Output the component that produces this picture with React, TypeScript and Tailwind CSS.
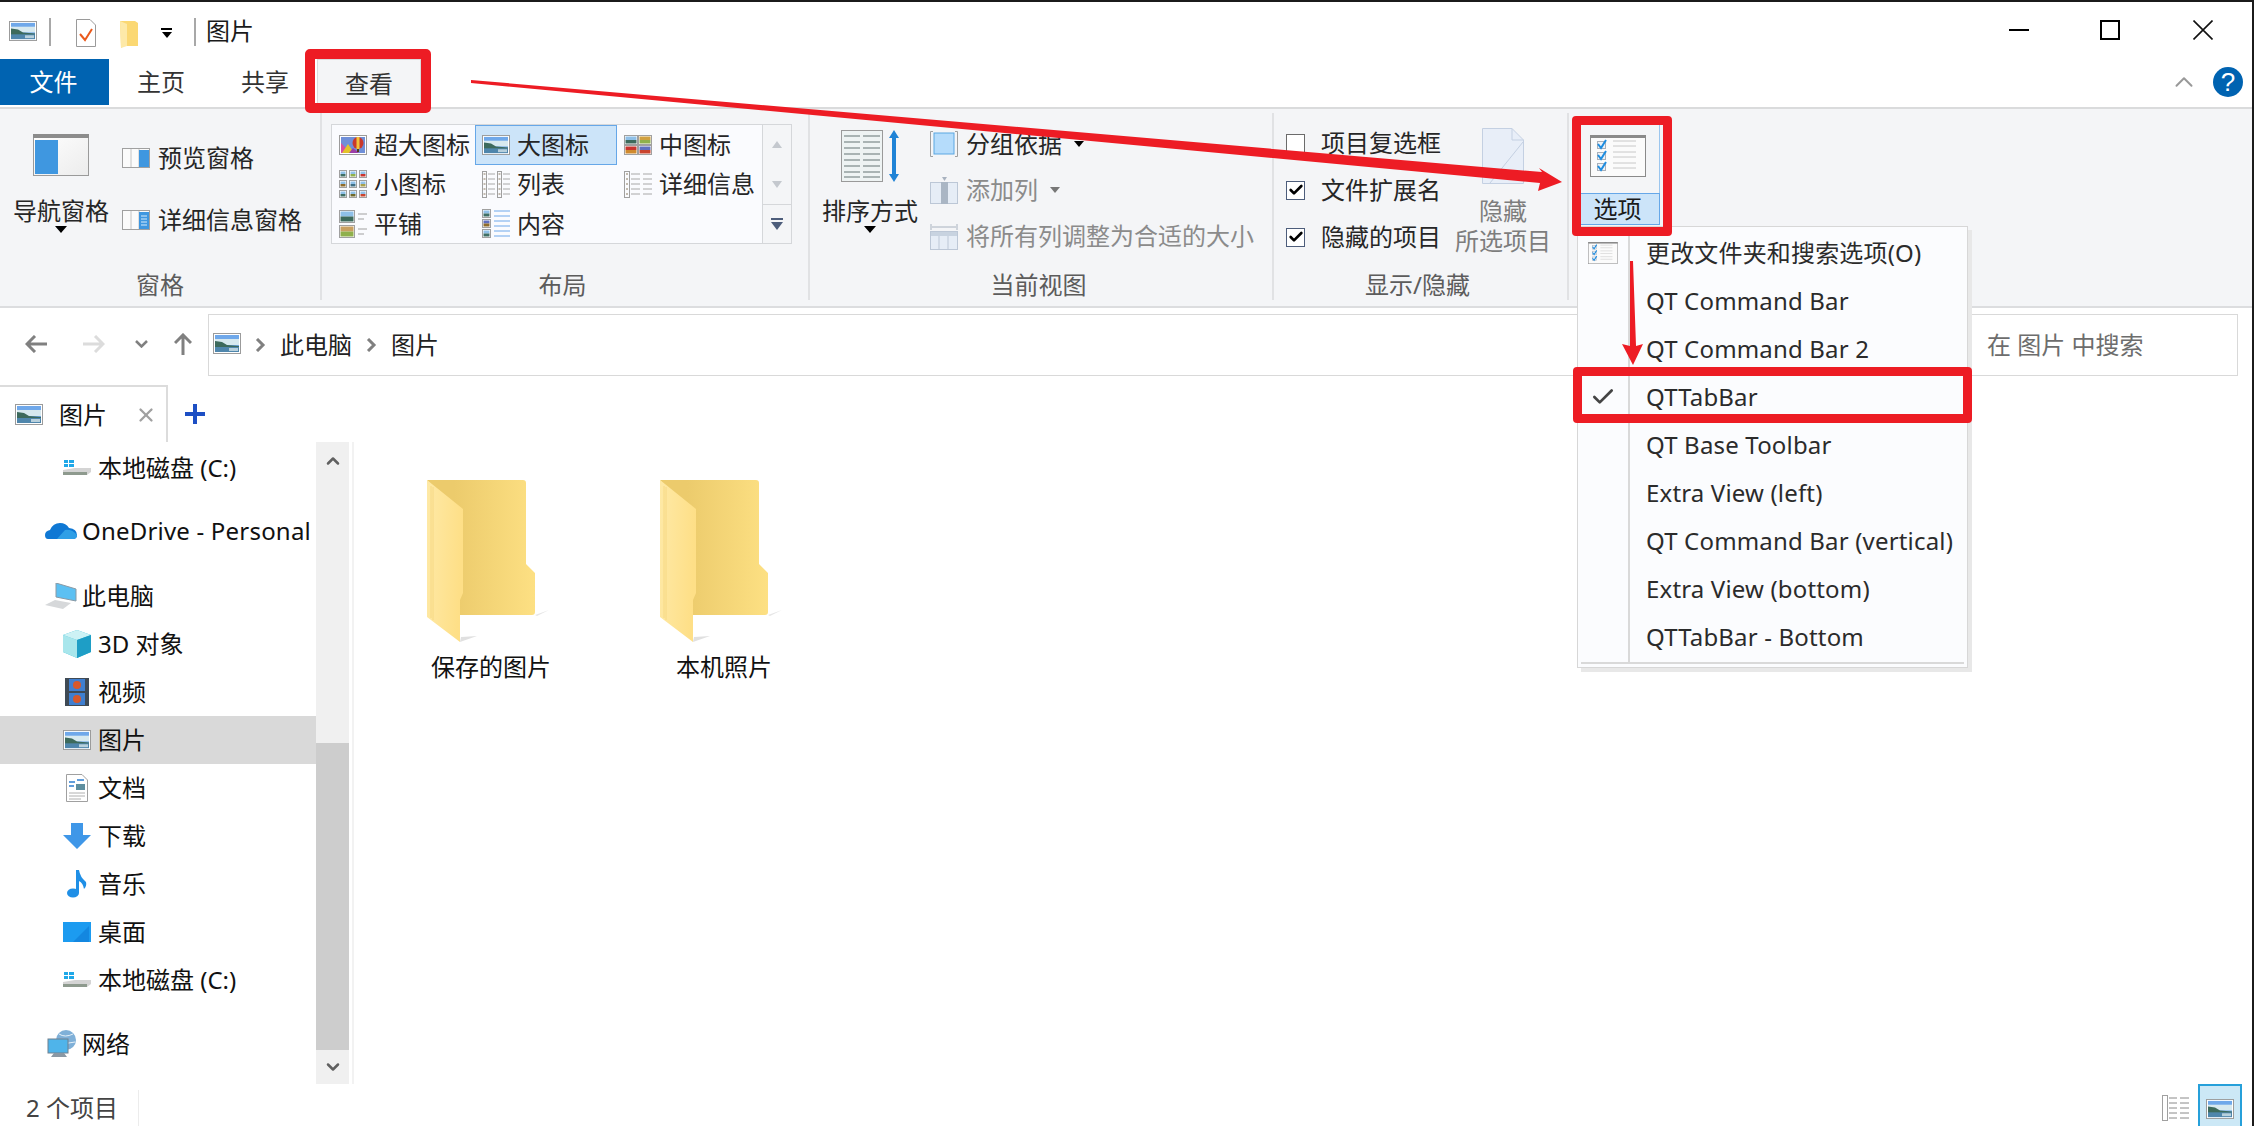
import { ChevronDown, ChevronUp, Check, X } from 'lucide-react';
import type { ReactNode } from 'react';

const FONT = "font-['Noto_Sans','Noto_Sans_CJK_SC',sans-serif]";

function Pic({ className = 'w-[28px] h-[21px]' }: { className?: string }) {
  return (
    <svg viewBox="0 0 28 21" className={className} preserveAspectRatio="none">
      <rect x="0.5" y="0.5" width="27" height="20" fill="#fff" stroke="#9b9b9b" />
      <rect x="2" y="2" width="24" height="17" fill="#6fa8ea" />
      <rect x="2" y="6" width="24" height="6" fill="#d7e9ef" />
      <path d="M2 8 L9 9 L14 12 L26 13 L26 19 L2 19 Z" fill="#3d6a5c" />
      <rect x="2" y="14" width="24" height="5" fill="#4f86ac" />
      <rect x="16" y="15" width="9" height="3" fill="#b8d0dc" />
    </svg>
  );
}

function Thumb({ x, y, w = 8, h = 8, c = '#4f8a6c', d = '#8fc0e8' }: { x: number; y: number; w?: number; h?: number; c?: string; d?: string }) {
  return (
    <g>
      <rect x={x + 0.5} y={y + 0.5} width={w - 1} height={h - 1} fill="#fff" stroke="#a0a0a0" />
      <rect x={x + 1.5} y={y + 1.5} width={w - 3} height={(h - 3) / 2} fill={d} />
      <rect x={x + 1.5} y={y + 1.5 + (h - 3) / 2} width={w - 3} height={(h - 3) / 2} fill={c} />
    </g>
  );
}

function GalleryIcon({ kind }: { kind: string }) {
  if (kind === 'lg') return <Pic className="w-[28px] h-[20px]" />;
  if (kind === 'xl') {
    return (
      <svg viewBox="0 0 28 20" className="w-[28px] h-[20px]">
        <rect x="0.5" y="0.5" width="27" height="19" fill="#fff" stroke="#9b9b9b" />
        <rect x="2" y="2" width="24" height="16" fill="#6f8fd8" />
        <path d="M2 18 L2 8 L8 14 L13 18 Z" fill="#d94fa0" />
        <path d="M3 18 L9 9 L15 18 Z" fill="#e3c32b" />
        <path d="M10 18 L14 13 L20 18 Z" fill="#9b3ea8" />
        <ellipse cx="19" cy="8" rx="5.500" ry="6" fill="#c9382c" />
        <rect x="17.500" y="2" width="3" height="12" fill="#f1c33a" />
        <rect x="18" y="14" width="2" height="3" fill="#5a3a1a" />
      </svg>
    );
  }
  if (kind === 'md') {
    return (
      <svg viewBox="0 0 28 20" className="w-[28px] h-[20px]">
        <Thumb x={0} y={0} w={14} h={10} c="#3d6a5c" />
        <Thumb x={14} y={0} w={14} h={10} c="#8fb04c" d="#d0a040" />
        <Thumb x={0} y={10} w={14} h={10} c="#d08a2e" d="#c9342e" />
        <Thumb x={14} y={10} w={14} h={10} c="#c9442e" d="#5f6fc0" />
      </svg>
    );
  }
  if (kind === 'sm') {
    const colors = ['#3f6f66', '#8fb04c', '#c9342e', '#8f6c2c', '#3f6f86', '#a8a04c', '#3f6f66', '#6f6a2c', '#c9442e'];
    return (
      <svg viewBox="0 0 28 28" className="w-[28px] h-[28px]">
        {colors.map((c, i) => (
          <Thumb key={i} x={(i % 3) * 10} y={Math.floor(i / 3) * 10} w={8} h={8} c={c} />
        ))}
      </svg>
    );
  }
  if (kind === 'list') {
    return (
      <svg viewBox="0 0 28 27" className="w-[28px] h-[27px]" fill="none">
        {[0, 15].map((x) => (
          <g key={x}>
            <rect x={x + 0.5} y="0.5" width="4" height="26" stroke="#a0a0a0" />
            <path d={`M${x + 1.500} 3h2M${x + 1.500} 8h2M${x + 1.500} 13h2M${x + 1.500} 18h2M${x + 1.500} 23h2`} stroke="#8a7a60" />
            <path d={`M${x + 6} 3h7M${x + 6} 8h7M${x + 6} 13h7M${x + 6} 18h7M${x + 6} 23h7`} stroke="#a8a8a8" />
          </g>
        ))}
      </svg>
    );
  }
  if (kind === 'details') {
    return (
      <svg viewBox="0 0 28 27" className="w-[28px] h-[27px]" fill="none">
        <rect x="0.5" y="0.5" width="5" height="26" stroke="#a0a0a0" />
        <path d="M2 3h2M2 8h2M2 13h2M2 18h2M2 23h2" stroke="#8a7a60" />
        <path d="M7 3h9M19 3h9M7 8h9M19 8h9M7 13h9M19 13h9M7 18h9M19 18h9M7 23h9M19 23h9" stroke="#a8a8a8" />
      </svg>
    );
  }
  if (kind === 'tile') {
    return (
      <svg viewBox="0 0 28 28" className="w-[28px] h-[28px]">
        <Thumb x={0} y={0} w={16} h={13} c="#3d6a5c" />
        <Thumb x={0} y={15} w={16} h={13} c="#8fb04c" d="#c9a060" />
        <path d="M19 4h9M19 9h6M19 19h9M19 24h6" stroke="#a0a0a0" />
      </svg>
    );
  }
  return (
    <svg viewBox="0 0 28 29" className="w-[28px] h-[29px]">
      <Thumb x={0} y={0} w={9} h={9} c="#3f6f66" />
      <Thumb x={0} y={10} w={9} h={9} c="#8f6c2c" d="#5f6fc0" />
      <Thumb x={0} y={20} w={9} h={9} c="#3f6f66" />
      <path d="M12 2h16M12 7h16M12 12h16M12 17h16M12 22h16M12 27h16" stroke="#6fa8ea" strokeWidth="1" />
    </svg>
  );
}

function PaneIcon({ side }: { side: 'preview' | 'details' }) {
  return (
    <svg viewBox="0 0 28 20" className="w-[28px] h-[20px]">
      <rect x="0.5" y="0.5" width="27" height="19" fill="#fbfbfb" stroke="#a0a0a0" />
      <path d="M9 1v18M17 1v18" stroke="#c4c4c4" />
      <rect x="17" y="2" width="10" height="17" fill="#3f97e0" />
      {side === 'details' && <path d="M19 6h6M19 9h6M19 12h6M19 15h6" stroke="#d9ecfb" />}
    </svg>
  );
}

function DropArrow() {
  return <div className="w-0 h-0 border-x-[6px] border-x-transparent border-t-[7px] border-t-black" />;
}

function RibbonGroup({ width, label, labelPad, children }: { width: string; label: string; labelPad?: string; children: ReactNode }) {
  return (
    <div className={`${width} flex flex-col border-r-2 border-[#e1e2e4]`}>
      <div className="h-[156px] flex">{children}</div>
      <div className={`h-[31px] flex items-center justify-center text-[24px] text-[#5c5c5c] ${labelPad ?? ''}`}>{label}</div>
    </div>
  );
}

function SmallBtn({ icon, text, muted, arrow }: { icon: ReactNode; text: string; muted?: boolean; arrow?: boolean }) {
  return (
    <div className={`h-[32px] flex items-center gap-[8px] whitespace-nowrap ${muted ? 'text-[#8b8b8b]' : 'text-[#262626]'}`}>
      <div className="w-[28px] flex justify-center">{icon}</div>
      <span>{text}</span>
      {arrow && (
        <div className={`ml-[4px] w-0 h-0 border-x-[5px] border-x-transparent border-t-[6px] ${muted ? 'border-t-[#777]' : 'border-t-black'}`} />
      )}
    </div>
  );
}

function CheckRow({ text, checked }: { text: string; checked?: boolean }) {
  return (
    <div className="h-[32px] flex items-center gap-[16px] text-[#262626] whitespace-nowrap">
      <div className={`w-[19px] h-[19px] border ${checked ? 'border-[#4d5d7b]' : 'border-[#6b6b6b]'} bg-white flex items-center justify-center`}>
        {checked && <Check className="w-[16px] h-[16px] text-black" strokeWidth={4} />}
      </div>
      <span>{text}</span>
    </div>
  );
}

function GalleryCell({ kind, text, selected, width }: { kind: string; text: string; selected?: boolean; width: string }) {
  return (
    <div className={`${width} h-[39.5px] flex items-center gap-[7px] pl-[7px] whitespace-nowrap ${selected ? 'bg-[#cce4f9] outline outline-1 -outline-offset-1 outline-[#66a7e8]' : ''}`}>
      <div className="w-[28px] flex justify-center">
        <GalleryIcon kind={kind} />
      </div>
      <span>{text}</span>
    </div>
  );
}

function OptionsIcon({ className }: { className: string }) {
  return (
    <svg viewBox="0 0 56 42" className={className}>
      <rect x="0.5" y="0.5" width="55" height="41" fill="#fbfbfb" stroke="#8a8a8a" />
      <rect x="0" y="0" width="56" height="3" fill="#8a8a8a" />
      {[9, 20, 31].map((y) => (
        <g key={y}>
          <rect x="7.5" y={y - 2.5} width="8" height="7" fill="#eef3f8" stroke="#a8b0ba" />
          <path d={`M8 ${y} L11 ${y + 4} L16 ${y - 4}`} stroke="#1d8ce0" strokeWidth="2" fill="none" />
          <path d={`M23 ${y - 3}h23M23 ${y + 2}h23`} stroke="#c8c8c8" />
        </g>
      ))}
    </svg>
  );
}

function Folder() {
  return (
    <svg viewBox="0 0 124 166" className="w-[124px] h-[166px]">
      <defs>
        <linearGradient id="folderBack" x1="0" x2="1" y1="0" y2="0">
          <stop offset="0.25" stopColor="#eccb6c" />
          <stop offset="1" stopColor="#fde083" />
        </linearGradient>
        <linearGradient id="folderFront" x1="0" x2="1" y1="0" y2="0.2">
          <stop offset="0" stopColor="#fee9a6" />
          <stop offset="1" stopColor="#fedf87" />
        </linearGradient>
      </defs>
      <path d="M108 135 L122 130 L110 136 Z" fill="#e6e6e6" />
      <path d="M33 162 L50 156 L34 157 Z" fill="#e0e0e0" />
      <path d="M0 0 H96 Q99 0 99 3 V84 L108 93 V132 Q108 135 105 135 H33 L30 40 Z" fill="url(#folderBack)" />
      <path d="M0 0 L36 29 V113 L33 120 V162 L0 137 Z" fill="url(#folderFront)" />
      <path d="M4 6 V138 M6 7 V140" stroke="#f5d57e" strokeWidth="0.8" />
    </svg>
  );
}

function TreeRow({ icon, text, indent, selected, gap, wide }: { icon: ReactNode; text: string; indent?: boolean; selected?: boolean; gap?: string; wide?: boolean }) {
  return (
    <div className={`h-[48px] flex items-center whitespace-nowrap text-[#111] ${gap ?? ''} ${selected ? 'bg-[#d9d9d9]' : ''} ${indent ? 'pl-[63px]' : 'pl-[45px]'} ${wide ? 'tracking-[0.2px]' : ''}`}>
      <div className={`${indent ? 'w-[35px]' : 'w-[37px]'} flex items-center`}>{icon}</div>
      <span>{text}</span>
    </div>
  );
}

function DriveIcon() {
  return (
    <svg viewBox="0 0 28 16" className="w-[28px] h-[16px]">
      <path d="M1 0h4v3H1zM6 0h5v3H6zM1 4h4v3H1zM6 4h5v3H6z" fill="#1fa8e8" />
      <path d="M0 10 L12 8 L28 8 V12 L24 15 H0 Z" fill="#d4d4d4" />
      <rect x="0" y="12" width="24" height="3" fill="#8e9a8e" />
    </svg>
  );
}

export default function App() {
  const menuItems = ['更改文件夹和搜索选项(O)', 'QT Command Bar', 'QT Command Bar 2', 'QTTabBar', 'QT Base Toolbar', 'Extra View (left)', 'QT Command Bar (vertical)', 'Extra View (bottom)', 'QTTabBar - Bottom'];

  return (
    <div lang="zh-CN" className={`${FONT} relative w-[2254px] h-[1126px] overflow-hidden bg-white border-t-2 border-r-2 border-[#1b1b1b] text-[24px] flex flex-col`}>
      {/* title bar */}
      <div className="h-[57px] flex items-start shrink-0">
        <div className="pl-[9px] pt-[19px]">
          <Pic className="w-[28px] h-[20px]" />
        </div>
        <div className="ml-[12px] mt-[16px] w-[2px] h-[28px] bg-[#a8a8a8]" />
        <svg viewBox="0 0 20 28" className="ml-[25px] mt-[17px] w-[20px] h-[28px]">
          <path d="M0.5 0.5H14L19.5 6V27.5H0.5Z" fill="#fff" stroke="#9a9a9a" />
          <path d="M4 15 L9 21 L16 10" stroke="#ea5a1c" strokeWidth="2" fill="none" />
        </svg>
        <svg viewBox="0 0 18 28" className="ml-[24px] mt-[19px] w-[18px] h-[28px]">
          <path d="M0 0H15L18 2V25H4L1 27Z" fill="#fbd873" />
          <path d="M0 0L7 3V25L1 27Z" fill="#fde9a8" />
        </svg>
        <div className="ml-[23px] mt-[26px] flex flex-col items-center gap-[2px]">
          <div className="w-[11px] h-[2px] bg-black" />
          <div className="w-0 h-0 border-x-[5px] border-x-transparent border-t-[6px] border-t-black" />
        </div>
        <div className="ml-[22px] mt-[16px] w-[2px] h-[28px] bg-[#a8a8a8]" />
        <div className="ml-[10px] mt-[11px] leading-[36px] text-[#1a1a1a]">图片</div>
        <div className="ml-auto flex items-start">
          <div className="w-[20px] h-[2px] mt-[27px] bg-black" />
          <div className="ml-[71px] mt-[18px] w-[20px] h-[20px] border-2 border-black" />
          <svg viewBox="0 0 20 20" className="ml-[73px] mr-[39px] mt-[18px] w-[20px] h-[20px]">
            <path d="M0.5 0.5L19.5 19.5M19.5 0.5L0.5 19.5" stroke="#111" strokeWidth="1.6" />
          </svg>
        </div>
      </div>

      {/* ribbon tabs */}
      <div className="h-[50px] shrink-0 flex items-start border-b-2 border-[#dadbdc] text-[#333]">
        <div className="w-[109px] pr-[2px] h-[46px] bg-[#0063b1] text-white flex items-center justify-center">文件</div>
        <div className="ml-[28px] h-[46px] flex items-center">主页</div>
        <div className="ml-[56px] h-[46px] flex items-center">共享</div>
        <div className="ml-[28px] w-[104px] h-[48px] bg-[#f4f5f7] flex items-center justify-center border-x border-t border-[#dadbdc]">查看</div>
        <div className="ml-auto mr-[9px] mt-[8px] flex items-center gap-[14px]">
          <ChevronUp className="w-[30px] h-[30px] text-[#999]" strokeWidth={1.6} />
          <div className="w-[30px] h-[30px] rounded-full bg-[#0063b1] text-white flex items-center justify-center text-[26px] font-['Liberation_Sans',sans-serif]">?</div>
        </div>
      </div>

      {/* ribbon */}
      <div className="h-[199px] shrink-0 bg-[#f4f5f7] border-b-2 border-[#dcdddf] flex pt-[4px] pb-[6px]">
        <RibbonGroup width="w-[322px]" label="窗格">
          <div className="w-[122px] flex flex-col items-center pt-[21px]">
            <svg viewBox="0 0 56 42" className="w-[56px] h-[42px] shrink-0">
              <defs>
                <linearGradient id="navRight" x1="0" x2="1" y1="0" y2="1">
                  <stop offset="0" stopColor="#ffffff" />
                  <stop offset="1" stopColor="#ececec" />
                </linearGradient>
              </defs>
              <rect x="0.5" y="0.5" width="55" height="41" fill="url(#navRight)" stroke="#9a9a9a" />
              <rect x="0" y="0" width="56" height="4" fill="#8c8c8c" />
              <rect x="2" y="6" width="23" height="34" fill="#3f97e0" />
            </svg>
            <div className="mt-[19px] leading-[32px] text-[#262626] whitespace-nowrap">导航窗格</div>
            <div className="-mt-[1px]"><DropArrow /></div>
          </div>
          <div className="flex flex-col pt-[29px] gap-[30px]">
            <SmallBtn icon={<PaneIcon side="preview" />} text="预览窗格" />
            <SmallBtn icon={<PaneIcon side="details" />} text="详细信息窗格" />
          </div>
        </RibbonGroup>

        <RibbonGroup width="w-[488px]" label="布局" labelPad="pr-[5px]">
          <div className="ml-[9px] mt-[11px] w-[461px] h-[120px] bg-[#fafbfe] border border-[#d5d7da] flex text-[#262626]">
            <div className="w-[430px] grid grid-cols-[143px_142px_145px] content-start">
              <GalleryCell width="w-[143px]" kind="xl" text="超大图标" />
              <GalleryCell width="w-[142px]" kind="lg" text="大图标" selected />
              <GalleryCell width="w-[145px]" kind="md" text="中图标" />
              <GalleryCell width="w-[143px]" kind="sm" text="小图标" />
              <GalleryCell width="w-[142px]" kind="list" text="列表" />
              <GalleryCell width="w-[145px]" kind="details" text="详细信息" />
              <GalleryCell width="w-[143px]" kind="tile" text="平铺" />
              <GalleryCell width="w-[142px]" kind="content" text="内容" />
            </div>
            <div className="flex-1 bg-[#f4f5f7] border-l border-[#d5d7da] flex flex-col items-center">
              <div className="h-[39px] flex items-center"><div className="w-0 h-0 border-x-[5px] border-x-transparent border-b-[7px] border-b-[#c4c8ce]" /></div>
              <div className="h-[40px] flex items-center"><div className="w-0 h-0 border-x-[5px] border-x-transparent border-t-[7px] border-t-[#c4c8ce]" /></div>
              <div className="h-[39px] w-full border-t border-[#d5d7da] flex flex-col items-center justify-center gap-[2px]">
                <div className="w-[12px] h-[2px] bg-[#4d5d7b]" />
                <div className="w-0 h-0 border-x-[6px] border-x-transparent border-t-[8px] border-t-[#4d5d7b]" />
              </div>
            </div>
          </div>
        </RibbonGroup>

        <RibbonGroup width="w-[464px]" label="当前视图" labelPad="pr-[5px]">
          <div className="w-[120px] flex flex-col items-center pt-[17px]">
            <svg viewBox="0 0 62 52" className="w-[62px] h-[52px] translate-x-[2px]">
              <rect x="0.5" y="0.5" width="41" height="51" fill="#eef3f3" stroke="#9a9a9a" />
              {[6, 12, 18, 24, 30, 36, 42, 47].map((y) => (
                <path key={y} d={`M3 ${y}h16M22 ${y}h17`} stroke="#a9b3b3" strokeWidth="2" />
              ))}
              <path d="M53 0 L58 8 H55 V44 H58 L53 52 L48 44 H51 V8 H48 Z" fill="#1f83d6" />
            </svg>
            <div className="mt-[13px] leading-[32px] text-[#262626] whitespace-nowrap">排序方式</div>
            <div className="-mt-[1px]"><DropArrow /></div>
          </div>
          <div className="flex flex-col pt-[15px] gap-[14px]">
            <SmallBtn
              text="分组依据"
              arrow
              icon={
                <svg viewBox="0 0 28 26" className="w-[28px] h-[26px]">
                  <path d="M3 0.5H0.5V25.5H3M25 0.5H27.5V25.5H25" stroke="#a0a0a0" fill="none" />
                  <rect x="4" y="2" width="20" height="21" fill="#b5dcfb" stroke="#5aa7e2" />
                </svg>
              }
            />
            <SmallBtn
              text="添加列"
              muted
              arrow
              icon={
                <svg viewBox="0 0 28 27" className="w-[28px] h-[27px]">
                  <path d="M12 0h5l-2.500 4z" fill="#a8b2bf" />
                  <rect x="0.5" y="5.500" width="27" height="21" fill="#e6edf6" stroke="#bcc7d6" />
                  <rect x="11" y="5" width="7" height="22" fill="#aab6c4" />
                </svg>
              }
            />
            <SmallBtn
              text="将所有列调整为合适的大小"
              muted
              icon={
                <svg viewBox="0 0 28 27" className="w-[28px] h-[27px]">
                  <path d="M1 1v6M27 1v6M2 4h24" stroke="#a8b2bf" fill="none" />
                  <rect x="0.5" y="8.500" width="27" height="18" fill="#e6edf6" stroke="#bcc7d6" />
                  <rect x="1" y="9" width="26" height="4" fill="#c8d3e0" />
                  <path d="M9 13v13M18 13v13" stroke="#bcc7d6" />
                </svg>
              }
            />
          </div>
        </RibbonGroup>

        <RibbonGroup width="w-[295px]" label="显示/隐藏" labelPad="pr-[6px]">
          <div className="pl-[12px] pt-[14px] flex flex-col gap-[15px] w-[167px]">
            <CheckRow text="项目复选框" />
            <CheckRow text="文件扩展名" checked />
            <CheckRow text="隐藏的项目" checked />
          </div>
          <div className="w-[124px] flex flex-col items-center pt-[15px] text-[#7d7d7d] leading-[30px]">
            <svg viewBox="0 0 42 56" className="w-[42px] h-[56px] shrink-0">
              <path d="M0.5 0.5H30L41.500 12V55.500H0.500Z" fill="#e8eef8" stroke="#c4d0e2" />
              <path d="M30 0.5V12H41.500M41 14L8 55" stroke="#c4d0e2" fill="none" />
            </svg>
            <div className="mt-[12px]">隐藏</div>
            <div>所选项目</div>
          </div>
        </RibbonGroup>

        <div className="pl-[11px] pt-[12px]">
          <div className="w-[80px] h-[100px] flex flex-col">
            <div className="h-[68px] shrink-0 border-r border-[#9cc6ee] flex items-start justify-center pt-[10px] pr-[4px]">
              <OptionsIcon className="w-[56px] h-[42px]" />
            </div>
            <div className="h-[32px] shrink-0 leading-[30px] bg-[#cce4f9] border border-[#66a7e8] text-center pr-[5px] text-[#1a1a1a]">选项</div>
          </div>
        </div>
      </div>

      {/* address bar */}
      <div className="h-[72px] shrink-0 flex items-center text-[#222]">
        <svg viewBox="0 0 22 18" className="ml-[25px] w-[22px] h-[18px]" fill="none" stroke="#808080" strokeWidth="3">
          <path d="M22 9H3M10 1L2 9L10 17" />
        </svg>
        <svg viewBox="0 0 22 18" className="ml-[36px] w-[22px] h-[18px]" fill="none" stroke="#dcdcdc" strokeWidth="3">
          <path d="M0 9H19M12 1L20 9L12 17" />
        </svg>
        <svg viewBox="0 0 13 8" className="ml-[30px] w-[13px] h-[8px]" fill="none" stroke="#808080" strokeWidth="2.500">
          <path d="M1 1L6.500 6.500L12 1" />
        </svg>
        <svg viewBox="0 0 18 22" className="ml-[26px] w-[18px] h-[22px]" fill="none" stroke="#808080" strokeWidth="3">
          <path d="M9 22V3M1 10L9 2L17 10" />
        </svg>
        <div className="ml-[16px] w-[1736px] h-[62px] border border-[#d9d9d9] flex items-center pl-[4px] mt-[2px]">
          <Pic className="w-[28px] h-[21px] -mt-[3px]" />
          <svg viewBox="0 0 11 14" className="ml-[14px] w-[11px] h-[14px]" fill="none" stroke="#808080" strokeWidth="3">
            <path d="M2 1L8 7L2 13" />
          </svg>
          <span className="ml-[14px]">此电脑</span>
          <svg viewBox="0 0 11 14" className="ml-[14px] w-[11px] h-[14px]" fill="none" stroke="#808080" strokeWidth="3">
            <path d="M2 1L8 7L2 13" />
          </svg>
          <span className="ml-[14px]">图片</span>
        </div>
        <div className="w-[294px] h-[62px] mt-[2px] border border-l-0 border-[#d9d9d9] flex items-center pl-[43px] text-[#6d6d6d] whitespace-pre">在 图片 中搜索</div>
      </div>

      {/* qttabbar tabs */}
      <div className="h-[62px] shrink-0 flex items-end">
        <div className="w-[168px] h-[57px] border-t-2 border-r-2 border-[#dcdcdc] flex items-center pl-[15px]">
          <Pic className="w-[28px] h-[21px]" />
          <span className="ml-[16px] text-[#111]">图片</span>
          <X className="ml-[28px] w-[22px] h-[22px] text-[#a0a0a0]" strokeWidth={2.5} />
        </div>
        <svg viewBox="0 0 20 20" className="ml-[17px] mb-[18px] w-[20px] h-[20px]">
          <path d="M10 0v20M0 10h20" stroke="#1d4fc4" strokeWidth="4" />
        </svg>
      </div>

      {/* body */}
      <div className="h-[642px] shrink-0 flex">
        <div className="w-[316px] shrink-0 pt-[2px]">
          <TreeRow indent icon={<DriveIcon />} text="本地磁盘 (C:)" />
          <TreeRow
            gap="mt-[15px]"
            text="OneDrive - Personal"
            wide
            icon={
              <svg viewBox="0 0 32 16" className="w-[32px] h-[16px]">
                <path d="M3 16 Q0 16 0 12 Q0 8 5 7 Q8 0 15 0 Q21 0 24 5 Q32 6 32 12 Q32 16 28 16 Z" fill="#0f78d4" />
                <path d="M12 16 L20 7 Q27 6 32 12 Q32 16 28 16 Z" fill="#2f9fe6" />
              </svg>
            }
          />
          <TreeRow
            gap="mt-[17px]"
            text="此电脑"
            icon={
              <svg viewBox="0 0 32 26" className="w-[32px] h-[26px]">
                <path d="M11 0 L31 6 V18 L11 14 Z" fill="#5cc0f2" stroke="#8a9aa5" />
                <path d="M0 22 L10 17 L26 20 L18 26 Z" fill="#d6d8da" />
              </svg>
            }
          />
          <TreeRow
            indent
            text="3D 对象"
            icon={
              <svg viewBox="0 0 28 28" className="w-[28px] h-[28px]">
                <path d="M14 0L28 5V22L14 28L0 22V5Z" fill="#32b9d4" />
                <path d="M0 5L14 10V28L0 22Z" fill="#a8e6ec" />
                <path d="M14 0L28 5L14 10L0 5Z" fill="#cdf2f5" />
                <path d="M14 10L28 5V22L14 28Z" fill="#1e9ec6" />
              </svg>
            }
          />
          <TreeRow
            indent
            text="视频"
            icon={
              <svg viewBox="0 0 24 28" className="ml-[2px] w-[24px] h-[28px]">
                <rect width="24" height="28" fill="#3f4a55" />
                <rect x="4" y="1" width="16" height="12" fill="#3f7fd0" />
                <rect x="4" y="15" width="16" height="12" fill="#3f7fd0" />
                <circle cx="12" cy="7" r="4" fill="#d6582c" />
                <circle cx="12" cy="21" r="4" fill="#d6582c" />
              </svg>
            }
          />
          <TreeRow indent selected text="图片" icon={<Pic className="w-[28px] h-[20px]" />} />
          <TreeRow
            indent
            text="文档"
            icon={
              <svg viewBox="0 0 22 28" className="ml-[3px] w-[22px] h-[28px]">
                <path d="M0.5 0.5H16L21.500 6V27.500H0.500Z" fill="#fff" stroke="#a0a0a0" />
                <path d="M3 8h6M11 6h7M3 12h5" stroke="#2f7fd0" strokeWidth="1.5" />
                <rect x="10" y="10" width="9" height="6" fill="#5f8f9f" />
                <path d="M3 19h16M3 22h16M3 25h12" stroke="#b0b0b0" />
              </svg>
            }
          />
          <TreeRow
            indent
            text="下载"
            icon={
              <svg viewBox="0 0 28 26" className="w-[28px] h-[26px]">
                <path d="M8 0H20V12H28L14 26L0 12H8Z" fill="#3f97e8" />
              </svg>
            }
          />
          <TreeRow
            indent
            text="音乐"
            icon={
              <svg viewBox="0 0 20 28" className="ml-[4px] w-[20px] h-[28px]">
                <ellipse cx="6" cy="23" rx="6" ry="4.500" fill="#1f8fe6" />
                <path d="M9 0H12Q13 7 19 12Q20 16 17 19Q16 13 12 11V23H9Z" fill="#1f8fe6" />
              </svg>
            }
          />
          <TreeRow
            indent
            text="桌面"
            icon={
              <svg viewBox="0 0 28 20" className="w-[28px] h-[20px]">
                <rect width="28" height="20" fill="#1c9bf0" />
                <path d="M10 20L26 4V20Z" fill="#1387e0" />
              </svg>
            }
          />
          <TreeRow indent icon={<DriveIcon />} text="本地磁盘 (C:)" />
          <TreeRow
            gap="mt-[16px]"
            text="网络"
            icon={
              <svg viewBox="0 0 30 28" className="ml-[2px] w-[30px] h-[28px]">
                <circle cx="19" cy="10" r="10" fill="#7fb0d8" />
                <path d="M12 4Q18 8 26 4M10 12Q18 15 28 12" stroke="#e5f0f8" fill="none" />
                <rect x="1" y="9" width="20" height="14" fill="#4fb4ea" stroke="#6f8090" />
                <path d="M4 27H20L17 23H7Z" fill="#8a98a4" />
              </svg>
            }
          />
        </div>

        {/* tree scrollbar */}
        <div className="w-[33px] shrink-0 bg-[#f0f0f0] flex flex-col">
          <div className="h-[38px] flex items-center justify-center">
            <ChevronUp className="w-[20px] h-[20px] text-[#606060]" strokeWidth={3} />
          </div>
          <div className="h-[263px]" />
          <div className="h-[307px] bg-[#cdcdcd]" />
          <div className="flex-1 flex items-center justify-center">
            <ChevronDown className="w-[20px] h-[20px] text-[#606060]" strokeWidth={3} />
          </div>
        </div>
        <div className="ml-[3px] w-[2px] bg-[#f2f2f2]" />

        {/* folders */}
        <div className="flex pl-[73px] pt-[38px] text-[#111]">
          <div className="w-[233px] flex flex-col items-start">
            <Folder />
            <div className="ml-[4px] mt-[3px] whitespace-nowrap">保存的图片</div>
          </div>
          <div className="w-[233px] flex flex-col items-start">
            <Folder />
            <div className="ml-[16px] mt-[3px] whitespace-nowrap">本机照片</div>
          </div>
        </div>
      </div>

      {/* status bar */}
      <div className="flex-1 flex items-stretch text-[#444]">
        <div className="pl-[26px] w-[139px] my-[6px] border-r border-[#ececec] flex items-center whitespace-pre">2 个项目</div>
        <div className="ml-auto flex items-center pr-[10px]">
          <svg viewBox="0 0 28 26" className="w-[28px] h-[26px] mr-[8px]">
            <rect x="0.5" y="0.5" width="5" height="25" fill="#fff" stroke="#a0a0a0" />
            <path d="M7 3h8M18 3h9M7 8h8M18 8h9M7 13h8M18 13h9M7 18h8M18 18h9M7 23h8M18 23h9" stroke="#8a8a8a" />
          </svg>
          <div className="w-[44px] h-full bg-[#cce8f6] border-t-2 border-x-2 border-[#26a0da] flex items-center justify-center">
            <Pic className="w-[28px] h-[20px]" />
          </div>
        </div>
      </div>

      {/* options dropdown, hangs under the 选项 button */}
      <div className="absolute left-[1577px] top-[224px] w-[391px] h-[442px] bg-[#fbfcfe] border border-[#d7d7d7] shadow-[4px_4px_0_#e8e8e8] pt-[2px] text-[#2b2b2b] tracking-[0.17px]">
        {menuItems.map((item, i) => (
          <div key={item} className="h-[48px] flex items-center">
            <div className="w-[52px] h-full border-r-2 border-[#d9d9d9] flex items-center justify-center">
              {i === 0 && <OptionsIcon className="w-[32px] h-[22px]" />}
              {item === 'QTTabBar' && <Check className="w-[26px] h-[26px] text-[#444]" strokeWidth={2.5} />}
            </div>
            <span className="ml-[16px] whitespace-nowrap">{item}</span>
          </div>
        ))}
        <div className="flex h-[1px]">
          <div className="w-[52px] h-full border-r-2 border-[#d9d9d9]" />
        </div>
        <div className="mx-[3px] h-[2px] bg-[#d9d9d9]" />
      </div>

      {/* red annotations */}
      <div className="absolute left-[305px] top-[47px] w-[126px] h-[64px] border-[10px] border-[#ed1c24] rounded-[5px]" />
      <div className="absolute left-[1572px] top-[114px] w-[100px] h-[120px] border-[9px] border-[#ed1c24] rounded-[4px]" />
      <div className="absolute left-[1573px] top-[365px] w-[399px] h-[56px] border-[9px] border-[#ed1c24] rounded-[4px]" />
      <svg viewBox="0 0 2254 1126" className="absolute left-0 -top-[2px] w-[2254px] h-[1126px] pointer-events-none">
        <polygon points="471,80 1542,172 1539,168 1562,182 1538,191 1540,183 471,83" fill="#ed1c24" />
        <polygon points="1630,261 1633,261 1636,346 1643,344 1633,365 1622,344 1630,346" fill="#ed1c24" />
      </svg>
    </div>
  );
}
